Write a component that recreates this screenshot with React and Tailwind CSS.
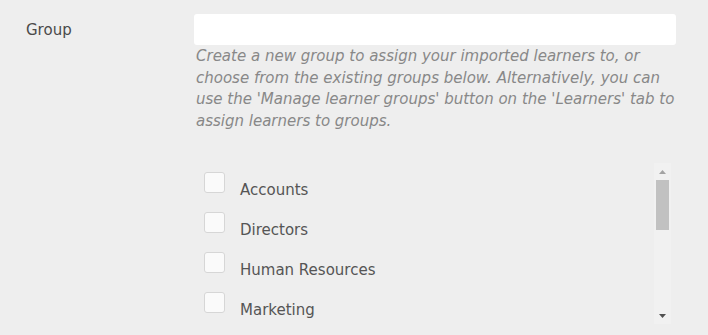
const groups = ['Accounts', 'Directors', 'Human Resources', 'Marketing'];

function ScrollBar() {
  return (
    <div className="flex w-[17px] shrink-0 flex-col bg-[#f1f1f1]">
      <div className="flex h-[17px] items-center justify-center">
        <svg width="7" height="4" viewBox="0 0 7 4">
          <path d="M3.5 0L7 4H0z" fill="#a3a3a3" />
        </svg>
      </div>
      <div className="flex-1 px-[2px]">
        <div className="h-[50px] bg-[#c1c1c1]" />
      </div>
      <div className="flex h-[17px] items-center justify-center">
        <svg width="7" height="4" viewBox="0 0 7 4">
          <path d="M0 0H7L3.5 4z" fill="#505050" />
        </svg>
      </div>
    </div>
  );
}

export default function App() {
  return (
    <div
      className="min-h-[335px] w-full bg-[#eeeeee] text-[15px] text-[#4a4a4a]"
      style={{ fontFamily: '"DejaVu Sans", Verdana, sans-serif' }}
    >
      <div className="flex pt-[14px]">
        {/* Label */}
        <div className="w-[194px] shrink-0 pl-[26px] pt-[7px] leading-[18px]">Group</div>

        {/* Field */}
        <div className="w-[482px]">
          <input
            type="text"
            className="block h-[31px] w-full rounded-[3px] bg-white px-2 outline-none"
          />
          <p className="mt-[1px] whitespace-nowrap pl-[2px] italic leading-[21.6px] text-[#888]">
            Create a new group to assign your imported learners to, or
            <br />
            choose from the existing groups below. Alternatively, you can
            <br />
            use the 'Manage learner groups' button on the 'Learners' tab to
            <br />
            assign learners to groups.
          </p>

          {/* Group list */}
          <div className="mt-[31px] flex h-[161px] w-[477px]">
            <div className="flex-1 overflow-hidden pt-[9px]">
              {groups.map((g) => (
                <label key={g} className="flex h-[40px] items-start pl-[10px]">
                  <span className="h-[21px] w-[21px] shrink-0 rounded-[3px] border border-[#d6d6d6] bg-[#fafafa]" />
                  <span className="ml-[15px] mt-[9px] leading-[18px] text-[#555]">{g}</span>
                </label>
              ))}
            </div>
            <ScrollBar />
          </div>
        </div>
      </div>
    </div>
  );
}
